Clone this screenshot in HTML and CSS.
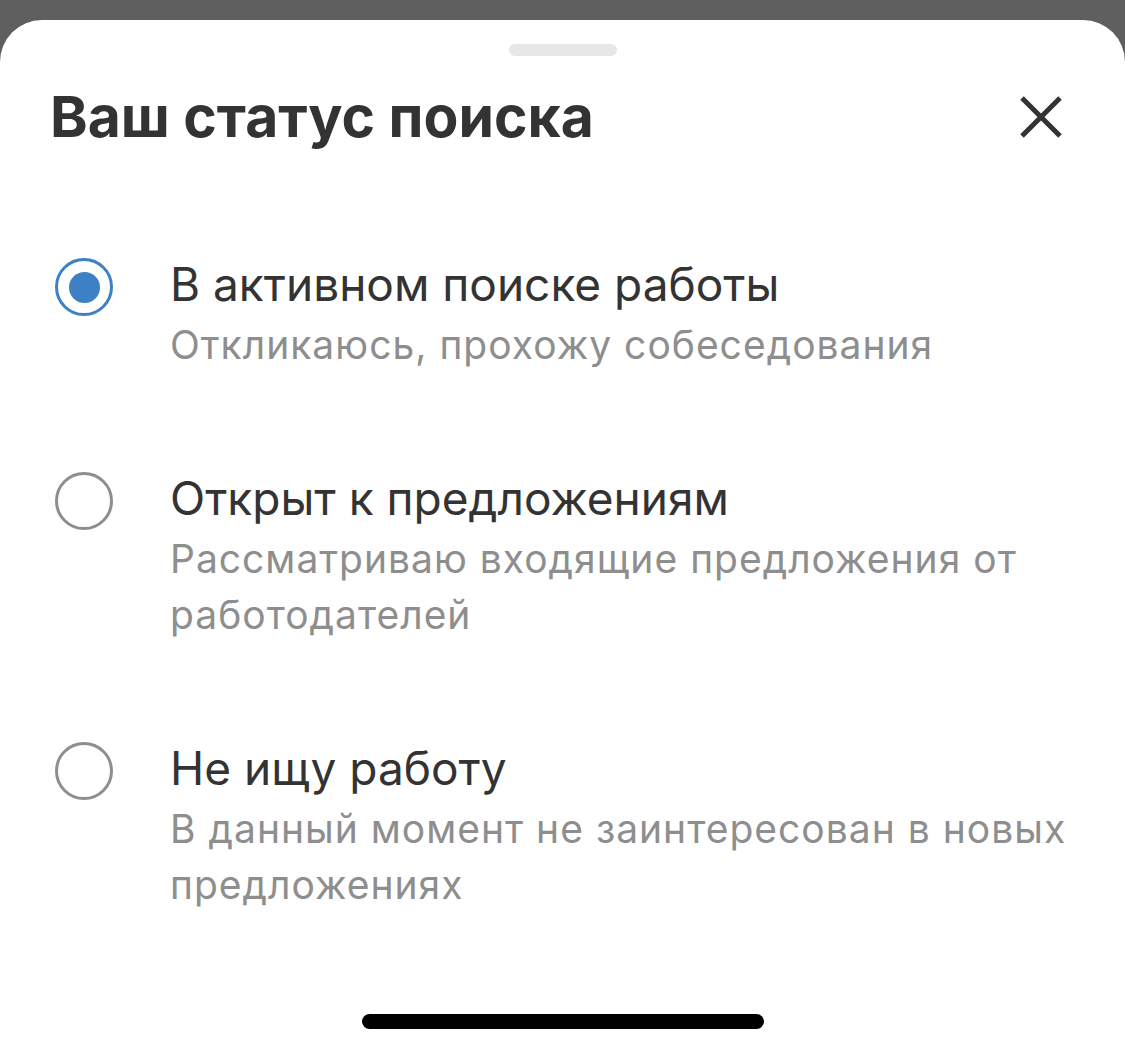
FILE: index.html
```html
<!DOCTYPE html>
<html lang="ru">
<head>
    <meta charset="UTF-8">
    <meta name="viewport" content="width=device-width, initial-scale=1.0">
    <title>Ваш статус поиска</title>
    <link rel="stylesheet" href="styles.css">
</head>
<body>

<div class="sheet">
    <div class="handle"></div>

    <div class="sheet-header">
        <h1>Ваш статус поиска</h1>
        <button class="close-btn" aria-label="Закрыть">
            <svg width="44" height="42" viewBox="0 0 44 42">
                <path d="M3 2 L41 40 M41 2 L3 40" stroke="#333" stroke-width="5" stroke-linecap="butt" fill="none"/>
            </svg>
        </button>
    </div>

    <div class="options">
        <label class="option">
            <span class="radio checked"></span>
            <span class="option-text">
                <span class="option-title">В активном поиске работы</span>
                <span class="option-desc">Откликаюсь, прохожу собеседования</span>
            </span>
        </label>

        <label class="option">
            <span class="radio"></span>
            <span class="option-text">
                <span class="option-title">Открыт к предложениям</span>
                <span class="option-desc">Рассматриваю входящие предложения от работодателей</span>
            </span>
        </label>

        <label class="option">
            <span class="radio"></span>
            <span class="option-text">
                <span class="option-title">Не ищу работу</span>
                <span class="option-desc">В данный момент не заинтересован в новых предложениях</span>
            </span>
        </label>
    </div>

    <div class="home-indicator"></div>
</div>

</body>
</html>
```

FILE: styles.css
```css
body {
    margin: 0;
    padding: 0;
    background-color: #5f5f5f;
    font-family: Inter, "Noto Sans", sans-serif;
    color: #333;
    overflow: hidden;
}
.sheet {
    margin-top: 20px;
    height: 1033px;
    background: white;
    border-radius: 42px 42px 0 0;
    display: flex;
    flex-direction: column;
    box-sizing: border-box;
}
.handle {
    width: 108px;
    height: 12px;
    border-radius: 6px;
    background-color: #e7e7e7;
    margin: 24px auto 0;
}
.sheet-header {
    display: flex;
    justify-content: space-between;
    align-items: center;
    padding: 0 62px 0 50px;
    margin-top: 27px;
}
.sheet-header h1 {
    margin: 0;
    font-size: 57px;
    line-height: 67px;
    font-weight: 700;
    color: #333;
}
.close-btn {
    background: none;
    border: none;
    padding: 0;
    width: 44px;
    height: 42px;
    cursor: pointer;
}
.close-btn svg {
    display: block;
}
.options {
    padding: 106px 48px 0 55px;
}
.option {
    display: flex;
    align-items: flex-start;
    gap: 57px;
    margin-bottom: 97px;
    cursor: pointer;
}
.radio {
    flex-shrink: 0;
    width: 58px;
    height: 58px;
    border: 3.5px solid #8e8e8e;
    border-radius: 50%;
    box-sizing: border-box;
    margin-top: 2px;
    display: flex;
    align-items: center;
    justify-content: center;
}
.radio.checked {
    border-color: #3d80c6;
}
.radio.checked::after {
    content: "";
    width: 31px;
    height: 31px;
    border-radius: 50%;
    background-color: #3d80c6;
}
.option-text {
    display: flex;
    flex-direction: column;
}
.option-title {
    font-size: 46px;
    line-height: 56px;
    color: #333;
}
.option-desc {
    font-size: 39px;
    line-height: 56px;
    letter-spacing: 1px;
    color: #8e8e8e;
    margin-top: 5px;
}
.home-indicator {
    margin: auto auto 24px;
    width: 402px;
    height: 15px;
    border-radius: 8px;
    background-color: #000;
}
```
